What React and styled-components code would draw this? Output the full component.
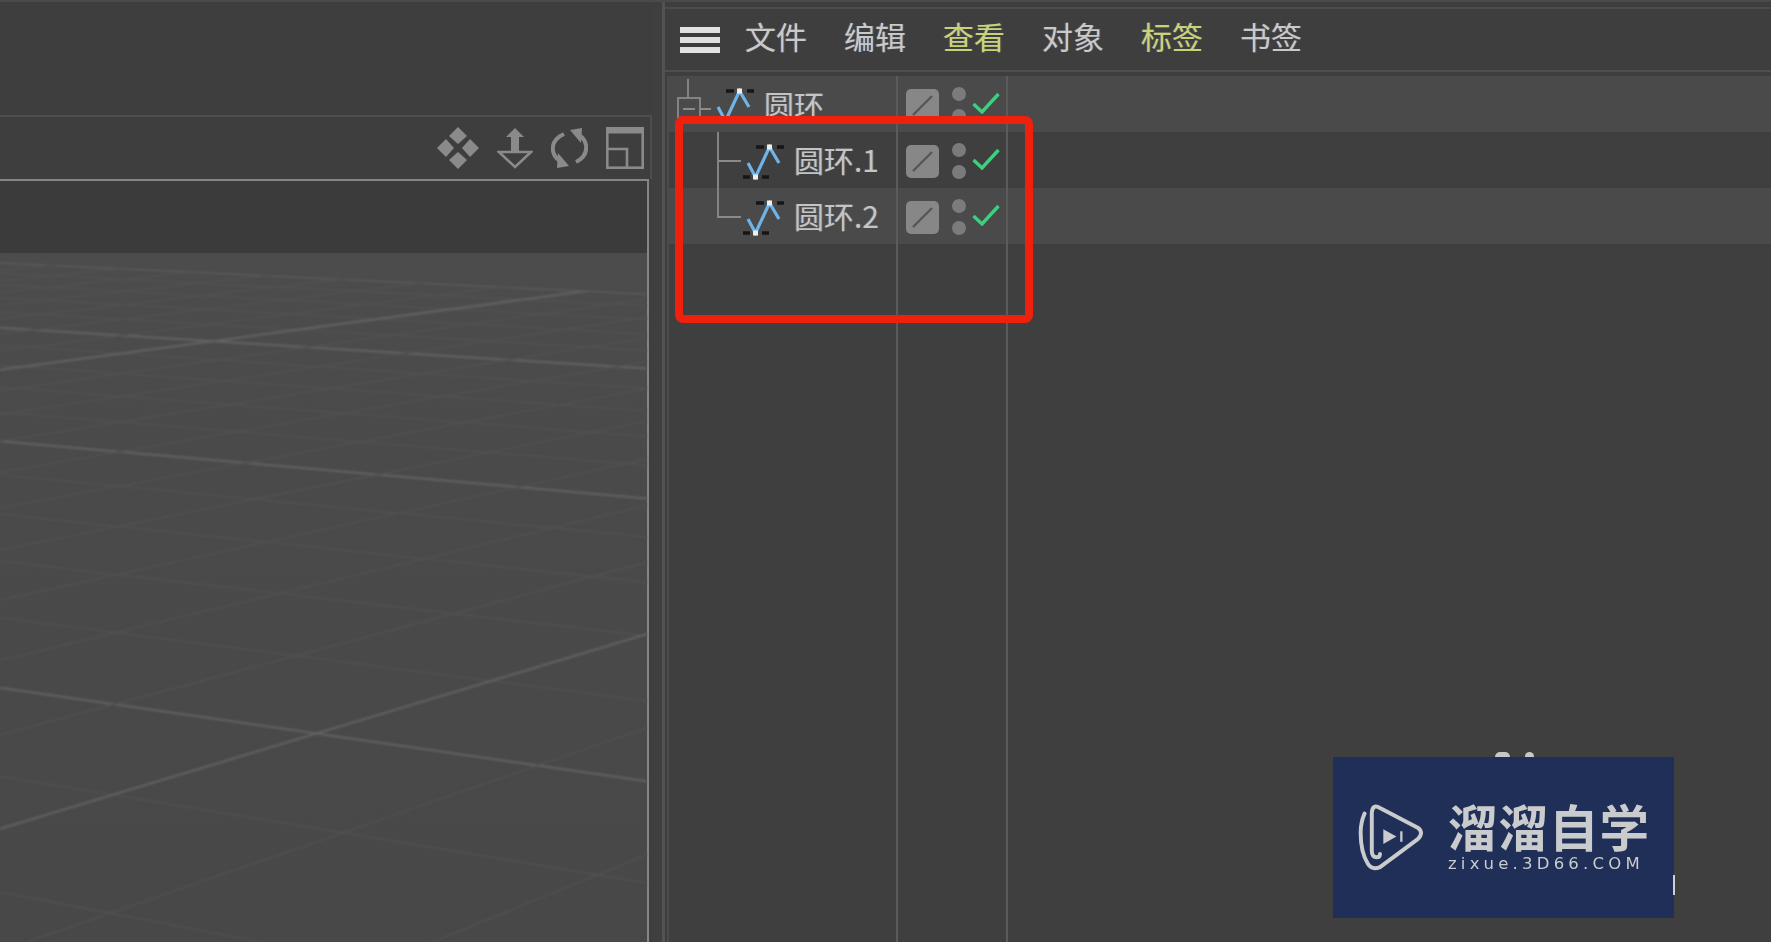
import React from "react";
import styled, { createGlobalStyle } from "styled-components";

const Global = createGlobalStyle`
  html, body { margin: 0; padding: 0; background: #3e3e3e; overflow: hidden; }
  * { box-sizing: border-box; }
`;

const CJK = `"Noto Sans CJK SC", "Noto Sans", sans-serif`;

const Page = styled.div`
  position: relative;
  display: flex;
  width: 1771px;
  height: 942px;
  overflow: hidden;
  background: #3e3e3e;
  border-top: 2px solid #4a4a4a;
  font-family: ${CJK};
`;
const Blurred = styled.div`
  display: flex;
  flex: 1;
  min-width: 0;
  filter: blur(0.6px);
`;

/* ---------- left pane ---------- */
const LeftPane = styled.section`
  flex: 0 0 652px;
  display: flex;
  flex-direction: column;
  padding-top: 113px;
`;
const ViewToolbar = styled.div`
  flex: 0 0 64px;
  display: flex;
  align-items: center;
  justify-content: flex-end;
  gap: 18px;
  padding-right: 6px;
  border-top: 2px solid #4e4e4e;
  border-right: 2px solid #4e4e4e;
`;
const ToolIcon = styled.svg`
  display: block;
  width: ${(p) => p.$w}px;
  height: 42px;
  color: #8a8a8a;
`;
const Viewport = styled.div`
  flex: 1;
  margin-right: 3px;
  display: flex;
  flex-direction: column;
  border-top: 2px solid #858585;
  border-right: 2px solid #858585;
  min-height: 0;
`;
const ViewHud = styled.div`
  flex: 0 0 72px;
  background: #3b3b3b;
`;
const Floor = styled.div`
  flex: 1;
  min-height: 0;
  background: linear-gradient(#4c4c4c, #4a4a4a 30%, #484848);
`;
const FloorSvg = styled.svg`
  display: block;
  width: 100%;
  height: 100%;
  filter: blur(0.8px);
`;

const Divider = styled.div`
  flex: 0 0 10px;
  background: #3f3f3f;
`;

/* ---------- right pane ---------- */
const RightPane = styled.section`
  flex: 1;
  min-width: 0;
  display: flex;
  flex-direction: column;
  padding-top: 5px;
  border-left: 3px solid #525252;
`;
const MenuBar = styled.nav`
  flex: 0 0 65px;
  display: flex;
  align-items: center;
  padding-left: 15px;
  background: #3e3e3e;
  border-top: 2px solid #4c4c4c;
  border-bottom: 2px solid #4f4f4f;
`;
const Hamburger = styled.div`
  display: flex;
  flex-direction: column;
  gap: 4px;
  width: 40px;
  margin-right: 25px;
  span {
    display: block;
    height: 6px;
    background: #e2e2e2;
  }
`;
const MenuList = styled.div`
  display: flex;
  gap: 36px;
  padding-bottom: 7px;
`;
const MenuItem = styled.span`
  font-size: 31px;
  line-height: 40px;
  width: 63px;
  white-space: nowrap;
  color: ${(p) => (p.$accent ? "#c9d277" : "#c9c9c9")};
  text-shadow: -1px 0 rgba(90, 160, 255, 0.3), 1px 0 rgba(255, 170, 80, 0.22);
`;
const Tree = styled.div`
  flex: 1;
  display: flex;
  flex-direction: column;
  margin: 4px 0 0 2px;
  border-left: 2px solid #4c4c4c;
  min-height: 0;
`;
const Row = styled.div`
  flex: ${(p) => (p.$fill ? "1" : "0 0 56px")};
  display: grid;
  grid-template-columns: 229px 110px 1fr;
  background: ${(p) => (p.$light ? "#4a4a4a" : "#3f3f3f")};
`;
const NameCell = styled.div`
  display: flex;
  align-items: center;
  border-right: 2px solid #5b5b5b;
  min-width: 0;
`;
const TagCell = styled.div`
  display: flex;
  align-items: center;
  padding: 2px 0 0 8px;
  border-right: 2px solid #5b5b5b;
`;
const Label = styled.span`
  margin: ${(p) => (p.$child ? "-2px" : "0")} 0 0 9px;
  font-size: 30px;
  line-height: 40px;
  color: #c4c4c4;
  white-space: nowrap;
  text-shadow: -1px 0 rgba(90, 160, 255, 0.3), 1px 0 rgba(255, 170, 80, 0.22);
`;
const Connector = styled.svg`
  display: block;
  flex: none;
  width: ${(p) => p.$w}px;
  height: 56px;
`;
const SplineSvg = styled.svg`
  display: block;
  flex: none;
  width: 44px;
  height: 37px;
  margin-top: 2px;
`;
const TagSquare = styled.div`
  flex: none;
  width: 33px;
  height: 33px;
  border-radius: 5px;
  background: #878787;
  display: flex;
  align-items: center;
  justify-content: center;
`;
const Dots = styled.div`
  display: flex;
  flex-direction: column;
  gap: 8px;
  margin-left: 13px;
  span {
    display: block;
    width: 14px;
    height: 14px;
    border-radius: 50%;
    background: #7b7b7b;
  }
`;
const Check = styled.svg`
  display: block;
  width: 28px;
  height: 22px;
  margin: -4px 0 0 6px;
`;

/* ---------- overlays ---------- */
const Highlight = styled.div`
  position: absolute;
  left: 675px;
  top: 114px;
  width: 358px;
  height: 207px;
  border: 8px solid #f0200f;
  border-radius: 8px;
  filter: blur(0.5px);
`;
const Watermark = styled.aside`
  position: absolute;
  left: 1333px;
  top: 755px;
  width: 341px;
  height: 161px;
  background: #1f2f57;
  display: flex;
  align-items: center;
  padding: 0 0 4px 25px;
  color: #cacbcd;
  filter: blur(0.5px);
`;
const Bump = styled.span`
  position: absolute;
  top: -5px;
  left: ${(p) => p.$x}px;
  width: ${(p) => p.$s}px;
  height: 5px;
  border-radius: 6px 6px 0 0;
  background: #c8c8c8;
`;
const Tick = styled.span`
  position: absolute;
  right: -1px;
  top: 118px;
  width: 2px;
  height: 20px;
  background: #d0d0d0;
`;
const LogoMark = styled.svg`
  display: block;
  flex: none;
  width: 67px;
  height: 67px;
  margin-top: 3px;
`;
const BrandText = styled.div`
  margin-left: 23px;
  display: flex;
  flex-direction: column;
  gap: 2px;
`;
const BrandName = styled.div`
  font-size: 49.5px;
  font-weight: 700;
  line-height: 54px;
  letter-spacing: 1px;
  white-space: nowrap;
`;
const BrandUrl = styled.div`
  font-family: "DejaVu Sans", sans-serif;
  font-size: 16.5px;
  line-height: 18px;
  letter-spacing: 4.2px;
  white-space: nowrap;
`;

/* ---------- perspective floor lines ---------- */
const HORIZON = 20;
const A = { vx: -4400, vy: 50 };
const B = { vx: 2750, vy: 0 };
const W = 652;
const yAt = (v, y0, x) => v.vy + (y0 - v.vy) * (1 - x / v.vx);
const y0From = (r) => HORIZON + 1 / r;

const floorLines = [];
for (let k = -5; k <= 22; k++) {
  const rr = 0.00326 - 0.000176 * k;
  if (rr <= 0.0002) continue;
  const y0 = y0From(rr);
  floorLines.push({ key: `a${k}`, x1: 0, y1: y0, x2: W, y2: yAt(A, y0, W), major: k % 5 === 0 });
}
for (let k = -14; k <= 40; k++) {
  const rr = 0.001238 + 0.000163 * k;
  if (rr <= 0.0002) continue;
  const y0 = y0From(rr);
  floorLines.push({ key: `b${k}`, x1: 0, y1: y0, x2: W, y2: yAt(B, y0, W), major: k % 10 === 0 });
}

function FloorGrid() {
  const edgeLeft = y0From(0.00414);
  const edgeRight = yAt(A, edgeLeft, W);
  return (
    <FloorSvg viewBox="0 252 647 690" preserveAspectRatio="xMinYMin slice">
      <defs>
        <clipPath id="floor-edge">
          <polygon points={`0,${edgeLeft} ${W},${edgeRight} ${W},950 0,950`} />
        </clipPath>
      </defs>
      <g clipPath="url(#floor-edge)">
        {floorLines.map((l) => (
          <line
            key={l.key}
            x1={l.x1}
            y1={l.y1}
            x2={l.x2}
            y2={l.y2}
            stroke={l.major ? "#646464" : "#525252"}
            strokeWidth={l.major ? 2 : 1.5}
          />
        ))}
      </g>
    </FloorSvg>
  );
}

/* ---------- icons ---------- */
const MoveIcon = () => (
  <ToolIcon $w={42} viewBox="0 0 42 42" fill="currentColor">
    <path d="M21 0 30 9 21 17 12 9Z" />
    <path d="M21 42 30 33 21 25 12 33Z" />
    <path d="M0 21 9 12 17 21 9 30Z" />
    <path d="M42 21 33 12 25 21 33 30Z" />
  </ToolIcon>
);
const UpDownIcon = () => (
  <ToolIcon $w={36} viewBox="0 0 36 42" fill="none" stroke="currentColor">
    <path d="M18 1 27 10H22V24H14V10H9Z" fill="currentColor" stroke="none" />
    <path d="M2 25H34L18 40Z" strokeWidth="2.6" />
  </ToolIcon>
);
const RotateIcon = () => (
  <ToolIcon $w={37} viewBox="0 0 37 42" fill="none" stroke="currentColor">
    <path d="M13 7C4 11 1 17 2 24 3 29 6 32 9 34" strokeWidth="4" />
    <path d="M7 26 18 39 6 41Z" fill="currentColor" stroke="none" />
    <path d="M25 35C33 31 36 25 35 18 34 13 31 10 28 8" strokeWidth="4" />
    <path d="M30 16 19 3 31 1Z" fill="currentColor" stroke="none" />
  </ToolIcon>
);
const LayoutIcon = () => (
  <ToolIcon $w={38} viewBox="0 0 38 42" fill="none" stroke="currentColor" strokeWidth="2.6">
    <rect x="1.3" y="1.3" width="35.4" height="39.4" />
    <path d="M1 4H37" strokeWidth="5" />
    <path d="M1 22H21V41" />
  </ToolIcon>
);

const Spline = () => (
  <SplineSvg viewBox="0 0 44 37">
    <path d="M2 34H9M21 34H28M15 4H23M36 4H43" stroke="#161616" strokeWidth="3.6" />
    <path d="M7 20 14.5 34 28.5 4 38 20" fill="none" stroke="#6fb4e8" strokeWidth="3.2" />
    <rect x="12" y="31.5" width="5" height="5" fill="#eee" />
    <rect x="26" y="1.5" width="5" height="5" fill="#eee" />
  </SplineSvg>
);

const lineColor = "#8a8a8a";
const RootConnector = () => (
  <Connector $w={42} viewBox="0 0 42 56" fill="none" stroke={lineColor} strokeWidth="1.8">
    <path d="M19 3V22" />
    <rect x="9" y="22" width="22" height="22" />
    <path d="M14 33H26M31 33H42" />
  </Connector>
);
const ChildConnector = ({ last }) => (
  <Connector $w={72} viewBox="0 0 72 56" fill="none" stroke={lineColor} strokeWidth="1.8">
    <path d={last ? "M49 0V29H72" : "M49 0V56M49 29H72"} />
  </Connector>
);

const Tags = () => (
  <TagCell>
    <TagSquare>
      <svg width="25" height="25" viewBox="0 0 25 25">
        <path d="M3 22 22 3" stroke="#565656" strokeWidth="2.4" />
      </svg>
    </TagSquare>
    <Dots>
      <span />
      <span />
    </Dots>
    <Check viewBox="0 0 28 22" fill="none">
      <path d="M1.5 12 10 20 26.5 2" stroke="#3ecf80" strokeWidth="3.4" />
    </Check>
  </TagCell>
);

const Logo = () => (
  <LogoMark viewBox="38 43 204 204" fill="none" stroke="currentColor" strokeWidth="12" strokeLinecap="round" strokeLinejoin="round">
    <path d="M58 72Q46 100 46 130 46 190 68 225 80 245 105 235L220 150Q240 130 220 115L105 55Q82 42 80 70V185Q80 205 95 205 105 205 105 195" />
    <path d="M115 120 155 142 115 165Z" fill="currentColor" stroke="none" />
    <path d="M170 126V158" strokeWidth="7" strokeLinecap="butt" />
  </LogoMark>
);

const menu = [
  { t: "文件" },
  { t: "编辑" },
  { t: "查看", accent: true },
  { t: "对象" },
  { t: "标签", accent: true },
  { t: "书签" },
];

export default function App() {
  return (
    <Page>
      <Global />
      <Blurred>
        <LeftPane>
          <ViewToolbar>
            <MoveIcon />
            <UpDownIcon />
            <RotateIcon />
            <LayoutIcon />
          </ViewToolbar>
          <Viewport>
            <ViewHud />
            <Floor>
              <FloorGrid />
            </Floor>
          </Viewport>
        </LeftPane>
        <Divider />
        <RightPane>
          <MenuBar>
            <Hamburger>
              <span />
              <span />
              <span />
            </Hamburger>
            <MenuList>
              {menu.map((m) => (
                <MenuItem key={m.t} $accent={m.accent}>
                  {m.t}
                </MenuItem>
              ))}
            </MenuList>
          </MenuBar>
          <Tree>
            <Row $light>
              <NameCell>
                <RootConnector />
                <Spline />
                <Label>圆环</Label>
              </NameCell>
              <Tags />
              <div />
            </Row>
            <Row>
              <NameCell>
                <ChildConnector />
                <Spline />
                <Label $child>圆环.1</Label>
              </NameCell>
              <Tags />
              <div />
            </Row>
            <Row $light>
              <NameCell>
                <ChildConnector last />
                <Spline />
                <Label $child>圆环.2</Label>
              </NameCell>
              <Tags />
              <div />
            </Row>
            <Row $fill>
              <NameCell />
              <TagCell />
              <div />
            </Row>
          </Tree>
        </RightPane>
      </Blurred>
      <Highlight />
      <Watermark>
        <Bump $x={162} $s={15} />
        <Bump $x={192} $s={9} />
        <Tick />
        <Logo />
        <BrandText>
          <BrandName>溜溜自学</BrandName>
          <BrandUrl>zixue.3D66.COM</BrandUrl>
        </BrandText>
      </Watermark>
    </Page>
  );
}
